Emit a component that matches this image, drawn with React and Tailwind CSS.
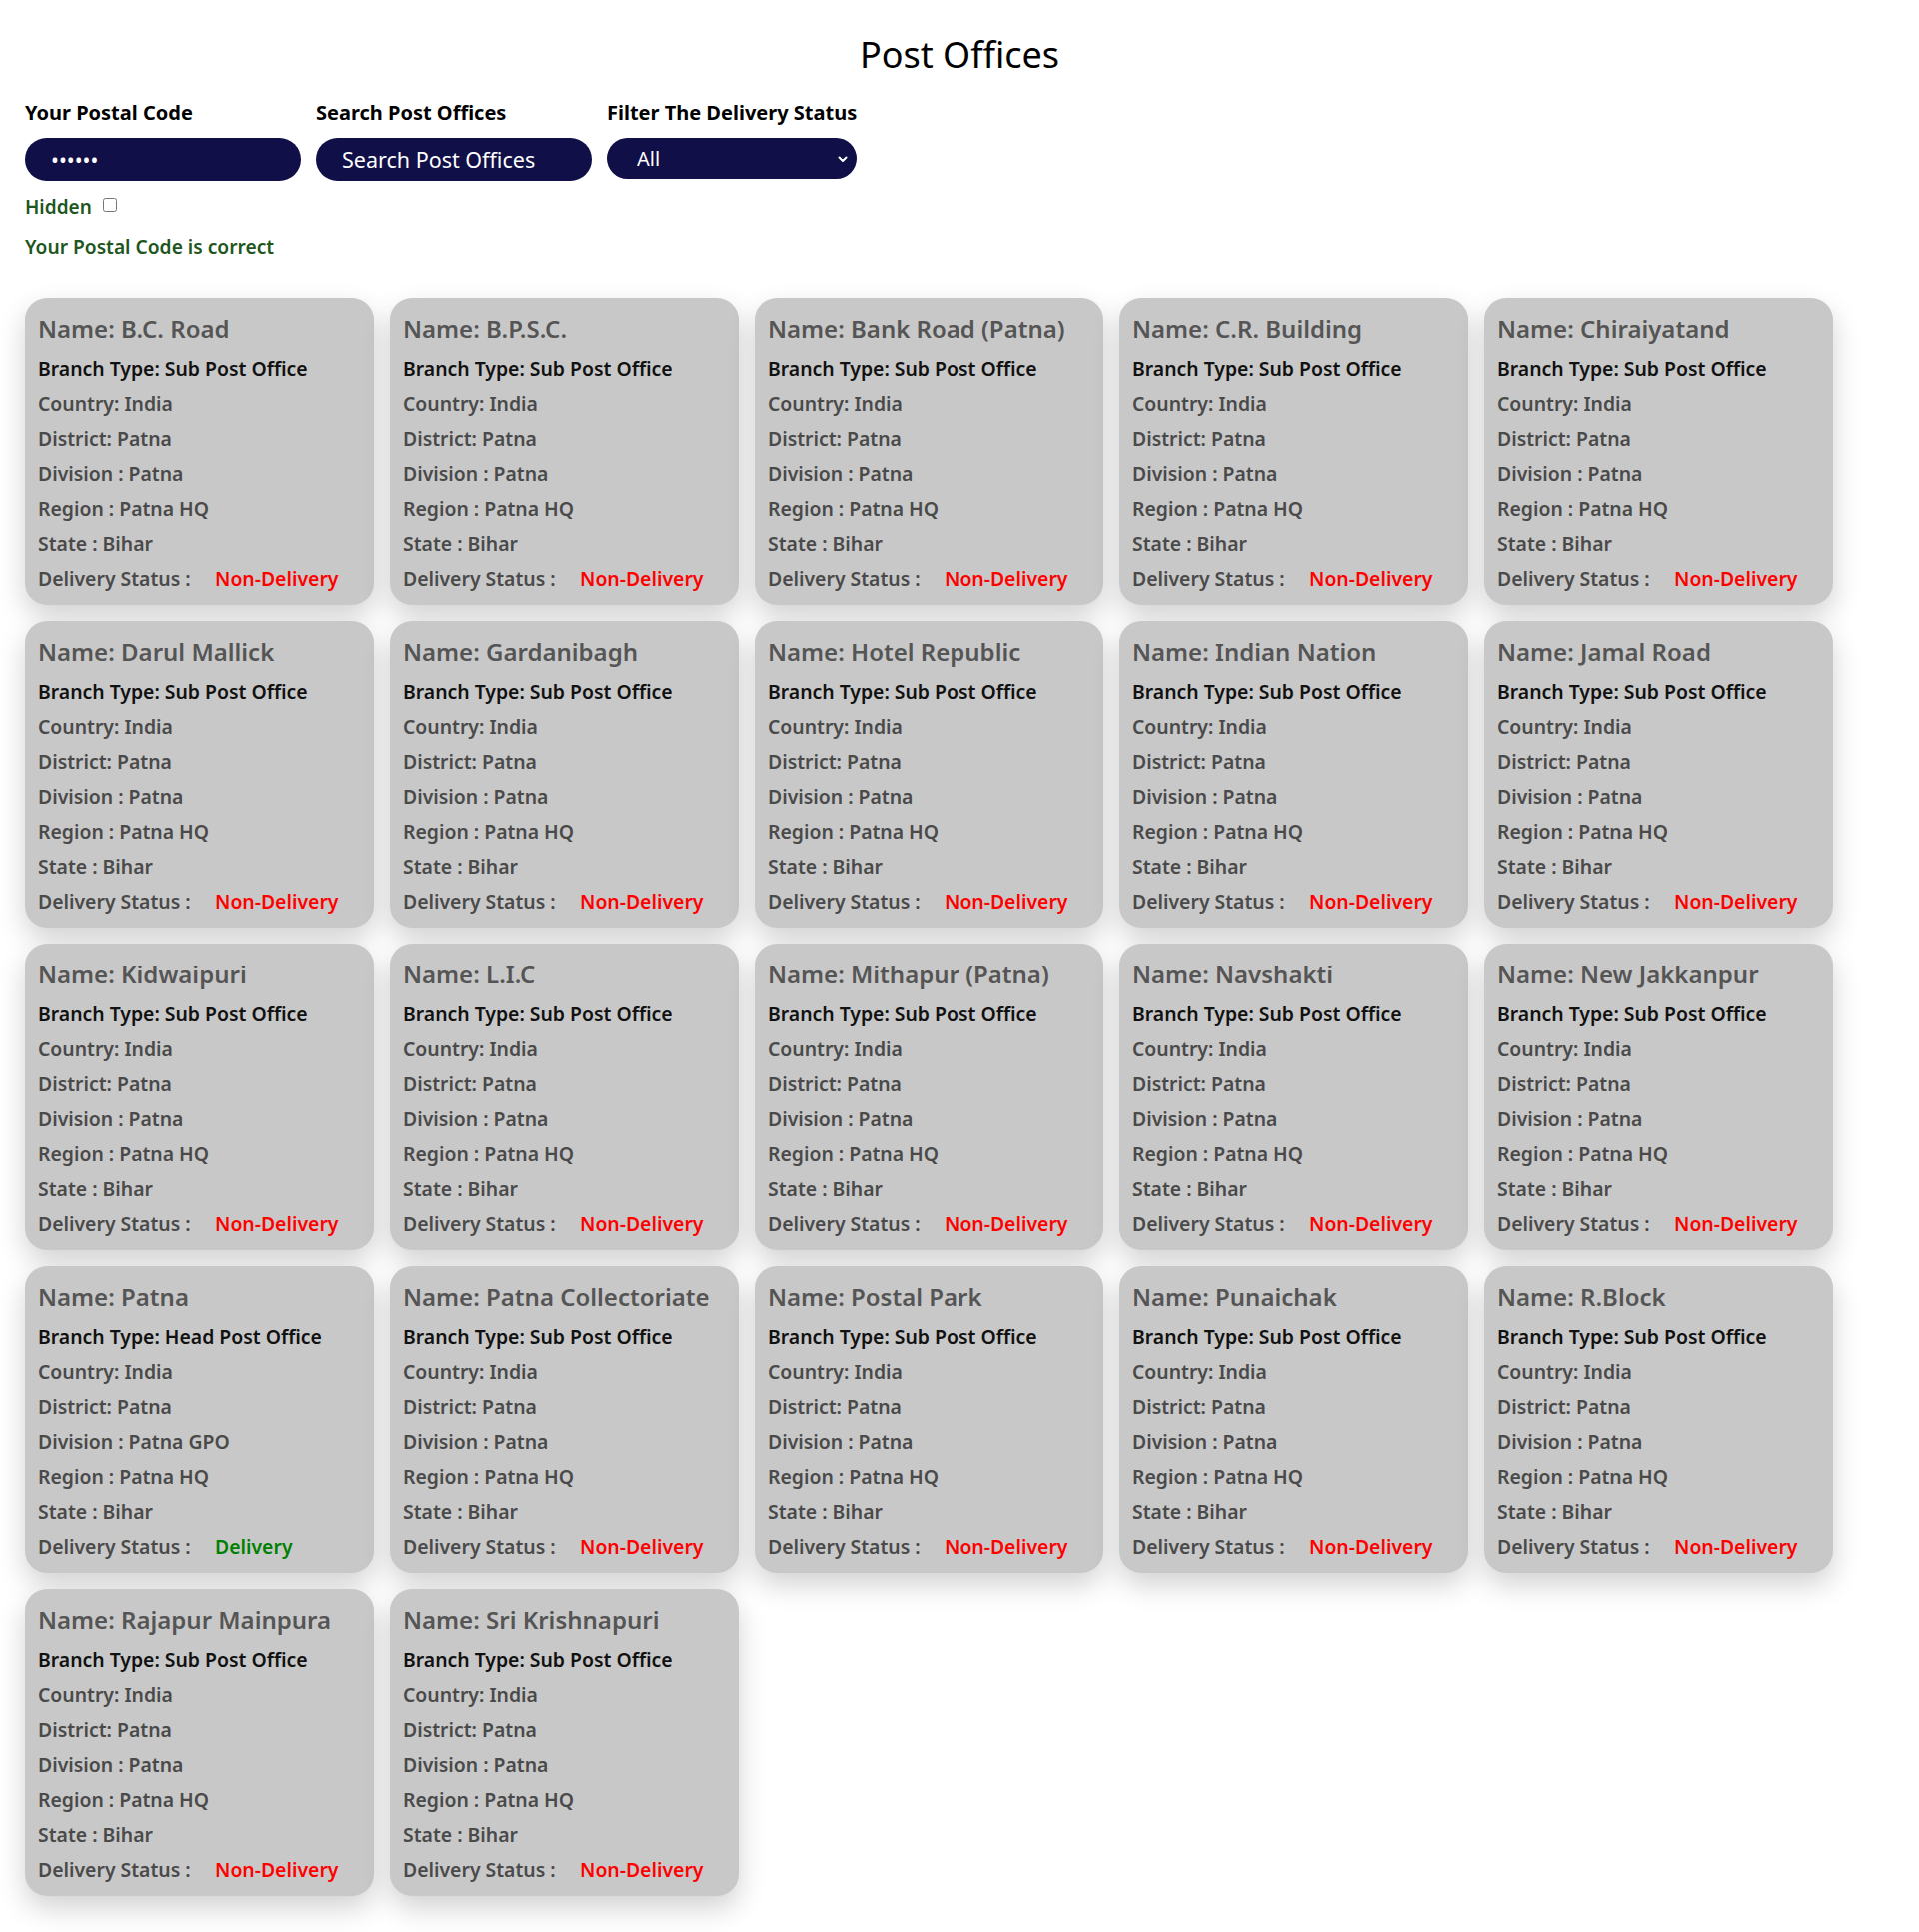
import React, { useState } from 'react';

const offices = [
    { name: 'B.C. Road' },
    { name: 'B.P.S.C.' },
    { name: 'Bank Road (Patna)' },
    { name: 'C.R. Building' },
    { name: 'Chiraiyatand' },
    { name: 'Darul Mallick' },
    { name: 'Gardanibagh' },
    { name: 'Hotel Republic' },
    { name: 'Indian Nation' },
    { name: 'Jamal Road' },
    { name: 'Kidwaipuri' },
    { name: 'L.I.C' },
    { name: 'Mithapur (Patna)' },
    { name: 'Navshakti' },
    { name: 'New Jakkanpur' },
    { name: 'Patna', type: 'Head Post Office', division: 'Patna GPO', delivery: 'Delivery' },
    { name: 'Patna Collectoriate' },
    { name: 'Postal Park' },
    { name: 'Punaichak' },
    { name: 'R.Block' },
    { name: 'Rajapur Mainpura' },
    { name: 'Sri Krishnapuri' },
];

function OfficeCard({ office }) {
    const delivery = office.delivery || 'Non-Delivery';
    return (
        <div className="w-[349px] h-[307px] rounded-[22px] bg-[#c8c8c8] pt-[15px] pb-[9px] px-[13px] shadow-[0_12px_28px_rgba(0,0,0,0.18)]">
            <h2 className="text-[24px] leading-[32px] font-semibold text-[#555555] whitespace-nowrap">
                Name: {office.name}
            </h2>
            <div className="mt-[6px] text-[19.4px] font-semibold">
                <p className="leading-[35px] text-[#111111]">Branch Type: {office.type || 'Sub Post Office'}</p>
                <p className="leading-[35px] text-[#4a4a4a]">Country: India</p>
                <p className="leading-[35px] text-[#4a4a4a]">District: Patna</p>
                <p className="leading-[35px] text-[#4a4a4a]">Division : {office.division || 'Patna'}</p>
                <p className="leading-[35px] text-[#4a4a4a]">Region : Patna HQ</p>
                <p className="leading-[35px] text-[#4a4a4a]">State : Bihar</p>
                <p className="leading-[35px] text-[#4a4a4a] flex">
                    <span className="w-[177px]">Delivery Status :</span>
                    <span className={delivery === 'Delivery' ? 'text-[#008000]' : 'text-[#ff0000]'}>{delivery}</span>
                </p>
            </div>
        </div>
    );
}

export default function App() {
    const [hidden, setHidden] = useState(false);

    return (
        <div className="min-h-[1933px] bg-white font-['Noto_Sans',sans-serif] px-[25px] pt-[33px] pb-[38px]">
            {/* Title */}
            <h1 className="text-center text-[36px] leading-[44px] text-black">Post Offices</h1>

            {/* Search form */}
            <div className="mt-[23px] flex gap-[15px]">
                <div className="w-[276px]">
                    <label className="block text-[20px] leading-[26px] font-bold text-black">Your Postal Code</label>
                    <input
                        type="password"
                        defaultValue="800001"
                        className="mt-[12px] w-full h-[43px] rounded-full bg-[#100f47] px-[26px] text-[21px] text-white outline-none"
                    />
                </div>
                <div className="w-[276px]">
                    <label className="block text-[20px] leading-[26px] font-bold text-black">Search Post Offices</label>
                    <input
                        type="text"
                        placeholder="Search Post Offices"
                        className="mt-[12px] w-full h-[43px] rounded-full bg-[#100f47] px-[26px] text-[21.5px] text-white placeholder:text-white outline-none"
                    />
                </div>
                <div className="w-[250px]">
                    <label className="block text-[20px] leading-[26px] font-bold text-black whitespace-nowrap">Filter The Delivery Status</label>
                    <div className="relative mt-[12px]">
                        <select className="appearance-none w-full h-[41px] rounded-full bg-[#100f47] pl-[30px] pr-8 text-[20px] text-white outline-none">
                            <option>All</option>
                            <option>Delivery</option>
                            <option>Non-Delivery</option>
                        </select>
                        <svg className="absolute right-[8px] top-[15px] w-[12px] h-[12px] pointer-events-none" viewBox="0 0 12 12" fill="none" stroke="white" strokeWidth="2" strokeLinecap="round" strokeLinejoin="round">
                            <path d="M2.5 4.5L6 8l3.5-3.5" />
                        </svg>
                    </div>
                </div>
            </div>

            <div className="mt-[13px] flex items-start gap-[11px] text-[19px] leading-[26px] font-semibold text-[#1e561e]">
                <span>Hidden</span>
                <input
                    type="checkbox"
                    checked={hidden}
                    onChange={() => setHidden(!hidden)}
                    className="mt-[4px] w-[14px] h-[14px]"
                />
            </div>
            <p className="mt-[14px] text-[19.2px] leading-[26px] font-semibold text-[#1e561e]">Your Postal Code is correct</p>

            {/* Cards */}
            <div className="mt-[38px] flex flex-wrap gap-x-[16px] gap-y-[16px] max-w-[1809px]">
                {offices.map((office) => (
                    <OfficeCard key={office.name} office={office} />
                ))}
            </div>
        </div>
    );
}
